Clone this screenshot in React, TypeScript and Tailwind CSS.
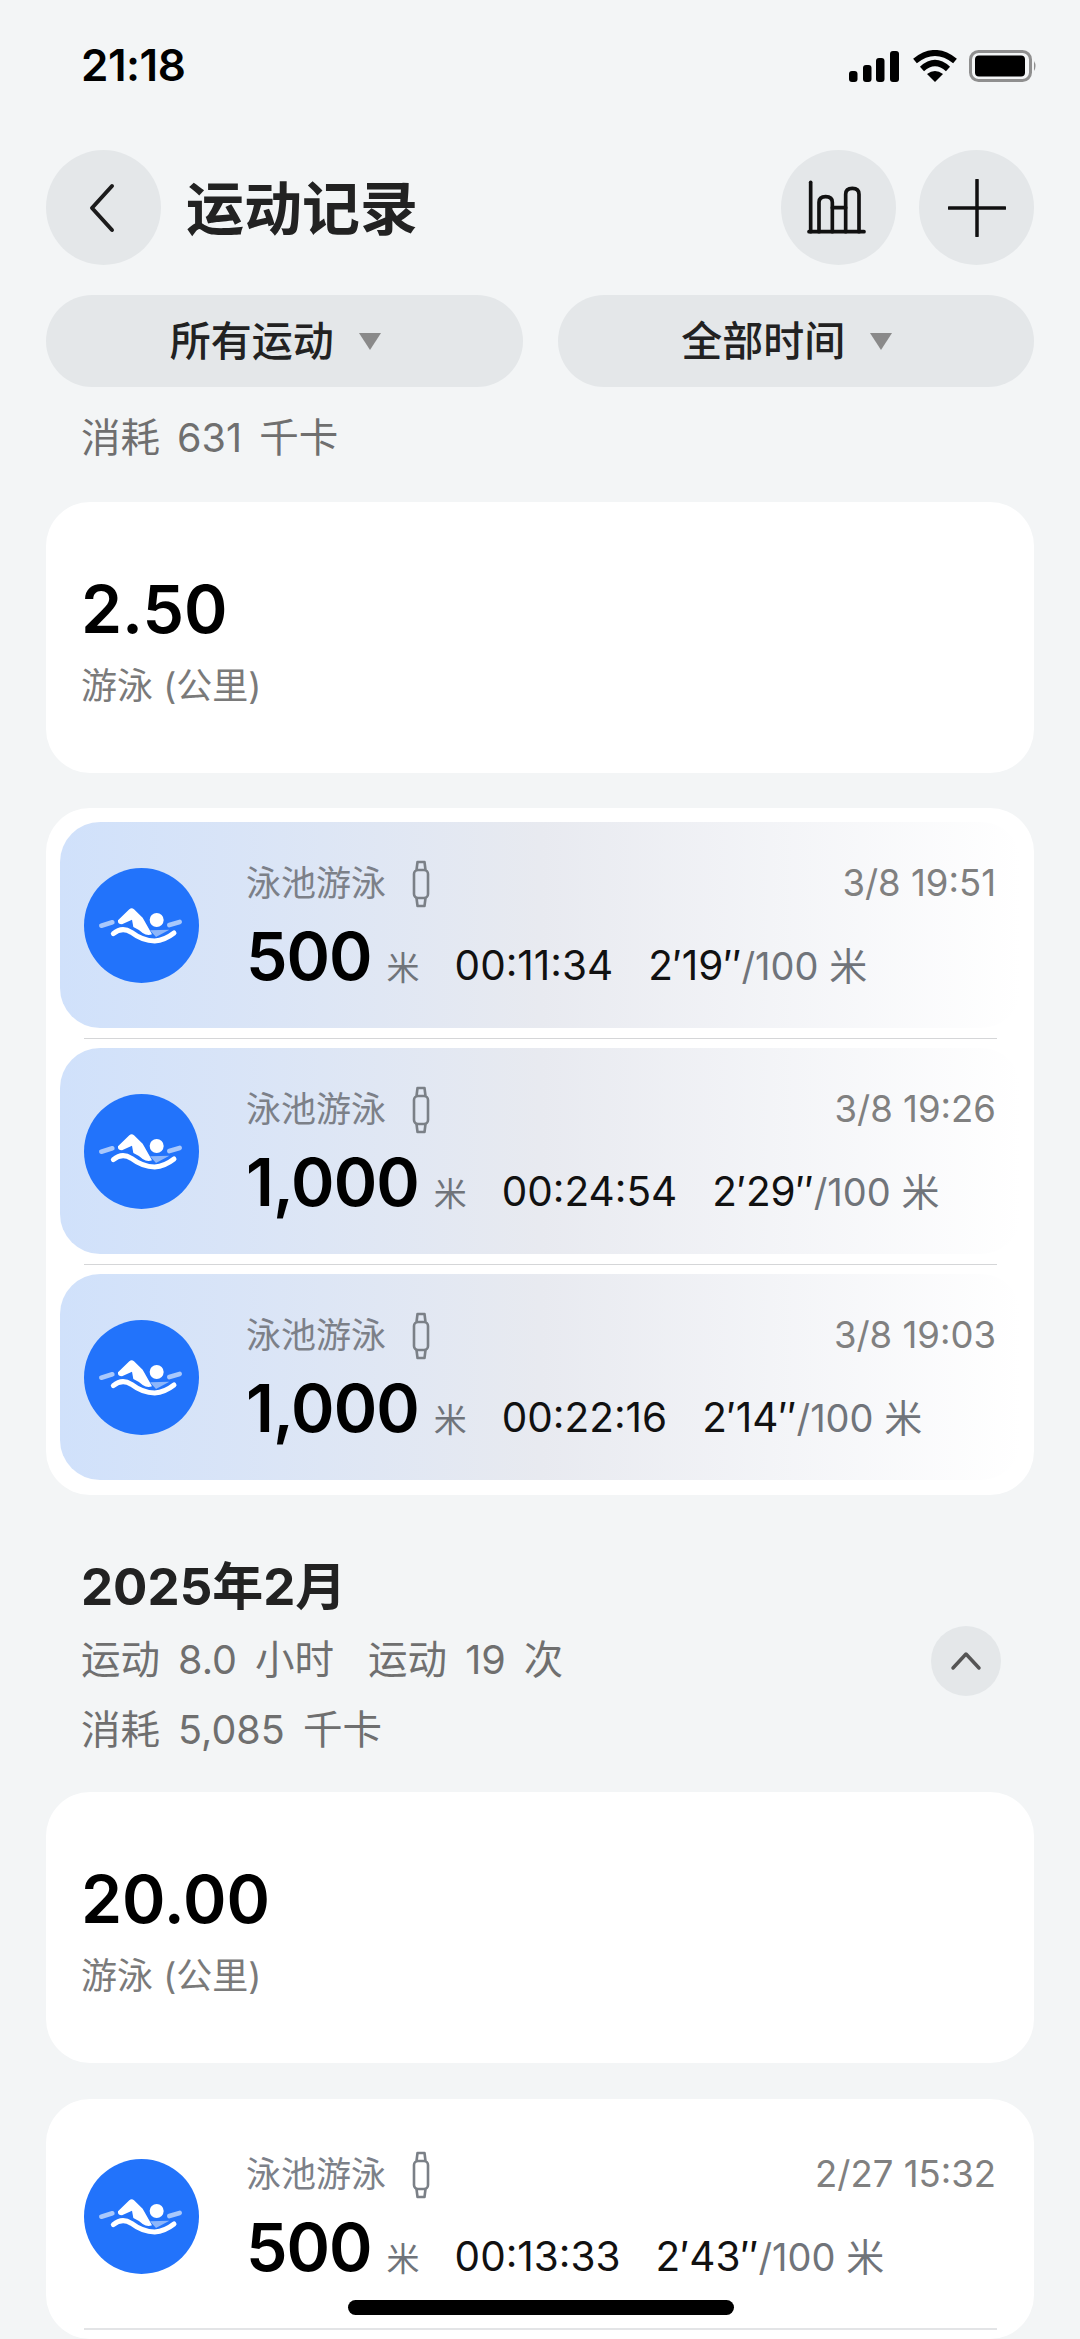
import React from "react";

const font = "font-['Inter','Noto_Sans_CJK_SC',sans-serif]";

type Swim = { dist: string; time: string; pace: string; date: string; highlight: boolean };

const swims: Swim[] = [
  { dist: "500", time: "00:11:34", pace: "2′19″", date: "3/8 19:51", highlight: true },
  { dist: "1,000", time: "00:24:54", pace: "2′29″", date: "3/8 19:26", highlight: true },
  { dist: "1,000", time: "00:22:16", pace: "2′14″", date: "3/8 19:03", highlight: true },
];

const SwimIcon = () => (
  <div className="w-[115px] h-[115px] rounded-full bg-[#2273fb] shrink-0 flex items-center justify-center">
    <svg width="95" height="60" viewBox="0 0 285 180" fill="none">
      <path d="M22 92 L55 82" stroke="#a9c8fb" strokeWidth="14" strokeLinecap="round" />
      <path d="M226 90 L257 81" stroke="#a9c8fb" strokeWidth="14" strokeLinecap="round" />
      <path d="M168 106 L226 104 L186 126 Z" fill="#8db6fa" />
      <circle cx="188" cy="75" r="21" fill="#fff" />
      <path d="M72 76 L106 43 Q113 37 120 43 L146 68 L174 118 Q160 124 146 114 Q132 102 118 96 L114 74 L84 88 Q70 88 72 76 Z" fill="#fff" />
      <path d="M58 116 Q84 94 112 112 Q146 138 182 138 Q212 136 240 114" stroke="#fff" strokeWidth="15" strokeLinecap="round" />
    </svg>
  </div>
);

const BandIcon = () => (
  <svg width="18" height="48" viewBox="0 0 18 48" fill="none" stroke="#7b8087" strokeWidth="2.6" strokeLinejoin="round">
    <rect x="2" y="10" width="14" height="28" rx="4" />
    <path d="M4.5 10 L5.5 2 H12.5 L13.5 10" />
    <path d="M4.5 38 L5.5 46 H12.5 L13.5 38" />
  </svg>
);

const SwimRow = ({ s }: { s: Swim }) => (
  <div
    className={
      "h-[206px] rounded-[40px] pl-6 pr-[25px] flex items-center " +
      (s.highlight ? "bg-linear-to-r from-[#d0e1fb] via-[#e8eaf0] to-white" : "")
    }
  >
    <SwimIcon />
    <div className="ml-[47px] flex-1 pt-[4px] pb-[7px]">
      <div className="flex items-center justify-between h-[46px]">
        <div className="flex items-center gap-[26px]">
          <span className="text-[35px] text-[#7c8088]">泳池游泳</span>
          <BandIcon />
        </div>
        <span className="text-[36.5px] text-[#808080]">{s.date}</span>
      </div>
      <div className="flex items-baseline h-[80px]">
        <span className="text-[66px] font-semibold text-black tracking-[-1px]">{s.dist}</span>
        <span className="text-[33px] text-[#70747a] ml-[15px]">米</span>
        <span className="text-[40.5px] text-[#111] ml-[35px]">{s.time}</span>
        <span className="text-[40.5px] text-[#111] ml-[35px]">{s.pace}</span>
        <span className="text-[38px] text-[#70747a]">/100 米</span>
      </div>
    </div>
  </div>
);

const Summary = ({ value }: { value: string }) => (
  <div className="mx-[46px] h-[271px] bg-white rounded-[44px] pl-[35px] pt-[65px]">
    <div className="text-[66px] leading-[84px] font-semibold text-black">{value}</div>
    <div className="text-[36px] leading-[46px] mt-[12px] text-[#7a7a7a]">游泳 (公里)</div>
  </div>
);

export default function App() {
  return (
    <div className={"relative w-[1080px] h-[2339px] overflow-hidden bg-[#f3f5f6] " + font}>
      {/* status bar */}
      <div className="h-[150px] pl-[81px] pr-[43px] pt-[40px] flex justify-between items-start">
        <span className="text-[44px] leading-[50px] font-semibold text-black tracking-[-0.5px]">21:18</span>
        <div className="flex items-center gap-[12px] pt-[10px]">
          <svg width="52" height="31" viewBox="0 0 52 31" fill="#000">
            <rect x="0" y="20" width="8.5" height="11" rx="3" />
            <rect x="14" y="14" width="8.5" height="17" rx="3" />
            <rect x="27" y="7" width="8.5" height="24" rx="3" />
            <rect x="41" y="0" width="9" height="31" rx="3" />
          </svg>
          <svg width="44" height="32" viewBox="0 0 44 32" fill="none" stroke="#000" strokeWidth="6">
            <path d="M2 11 Q22 -5 42 11" />
            <path d="M9 19 Q22 7 35 19" />
            <path d="M22 32 L14 24 Q22 18 30 24 Z" fill="#000" stroke="none" />
          </svg>
          <svg width="68" height="32" viewBox="0 0 68 32" fill="none">
            <rect x="1.5" y="1.5" width="60" height="29" rx="8" stroke="#8f8f8f" strokeWidth="3" />
            <rect x="6" y="5.5" width="50" height="21" rx="4" fill="#000" />
            <path d="M65 11 Q68 16 65 21 Z" fill="#8f8f8f" />
          </svg>
        </div>
      </div>

      {/* header */}
      <div className="flex items-center px-[46px]">
        <div className="w-[115px] h-[115px] rounded-full bg-[#e4e7e9] flex items-center justify-center pr-[3px]">
          <svg width="30" height="50" viewBox="0 0 30 50" fill="none" stroke="#1c1c1c" strokeWidth="4" strokeLinecap="round" strokeLinejoin="round">
            <path d="M25 3 L5 25 L25 47" />
          </svg>
        </div>
        <h1 className="ml-[25px] flex-1 pt-[4px] text-[58px] font-bold text-[#222]">运动记录</h1>
        <div className="w-[115px] h-[115px] rounded-full bg-[#e4e7e9] flex items-center justify-center">
          <svg width="100" height="85" viewBox="0 0 300 255" fill="none" stroke="#111" strokeWidth="11" strokeLinecap="round">
            <path d="M60 200 H225" />
            <path d="M65 52 V200" />
            <path d="M90 200 V112 Q90 95 110 95 Q130 95 130 112 V200" />
            <path d="M130 128 H170" />
            <path d="M170 200 V88 Q170 70 190 70 Q210 70 210 88 V200" />
          </svg>
        </div>
        <div className="ml-[23px] w-[115px] h-[115px] rounded-full bg-[#e4e7e9] flex items-center justify-center">
          <svg width="58" height="58" viewBox="0 0 58 58" fill="none" stroke="#111" strokeWidth="3.5" strokeLinecap="round">
            <path d="M29 1 V57" />
            <path d="M1 29 H57" />
          </svg>
        </div>
      </div>

      {/* filters */}
      <div className="mt-[30px] mx-[46px] flex gap-[35px]">
        {["所有运动", "全部时间"].map((label) => (
          <div key={label} className="flex-1 h-[92px] rounded-full bg-[#e4e7e9] flex items-center justify-center gap-[25px] pr-[18px]">
            <span className="text-[41px] font-medium text-[#222] pt-[2px]">{label}</span>
            <div className="w-0 h-0 border-x-[11px] border-x-transparent border-t-[17px] border-t-[#8a8a8a]" />
          </div>
        ))}
      </div>

      <div className="mt-[25px] ml-[81px] text-[39.5px] leading-[52px] text-[#6f6f6f] [word-spacing:6px]">消耗 631 千卡</div>

      <div className="mt-[38px]">
        <Summary value="2.50" />
      </div>

      {/* March list */}
      <div className="mt-[35px] mx-[46px] bg-white rounded-[44px] pt-[14px] pb-[15px] pl-[14px] pr-[13px]">
        {swims.map((s, i) => (
          <div key={s.date}>
            {i > 0 && <div className="h-[20px] flex items-center ml-[24px] mr-[24px]"><div className="h-px w-full bg-[#d5d6d8]" /></div>}
            <SwimRow s={s} />
          </div>
        ))}
      </div>

      {/* February header */}
      <div className="mt-[59px] mx-[46px] pl-[35px] relative h-[222px]">
        <h2 className="text-[51px] leading-[66px] font-bold text-[#222]">2025年2月</h2>
        <div className="mt-[14px] flex gap-[34px] text-[39.5px] leading-[52px] text-[#6f6f6f] [word-spacing:7px]">
          <span>运动 8.0 小时</span>
          <span>运动 19 次</span>
        </div>
        <div className="mt-[18px] text-[39.5px] leading-[52px] text-[#6f6f6f] [word-spacing:7px]">消耗 5,085 千卡</div>
        <div className="absolute right-[33px] top-[72px] w-[70px] h-[70px] rounded-full bg-[#e4e7e9] flex items-center justify-center">
          <svg width="32" height="20" viewBox="0 0 32 20" fill="none" stroke="#555" strokeWidth="3.5" strokeLinecap="round" strokeLinejoin="round">
            <path d="M3 17 L16 3 L29 17" />
          </svg>
        </div>
      </div>

      <div className="mt-[16px]">
        <Summary value="20.00" />
      </div>

      {/* February list */}
      <div className="mt-[36px] mx-[46px] bg-white rounded-[44px] pt-[14px] pl-[14px] pr-[13px]">
        <SwimRow s={{ dist: "500", time: "00:13:33", pace: "2′43″", date: "2/27 15:32", highlight: false }} />
        <div className="h-[20px] flex items-center ml-[24px] mr-[24px]"><div className="h-[2px] w-full bg-[#e3e4e6]" /></div>
      </div>

      {/* home indicator */}
      <div className="absolute left-[348px] bottom-[24px] w-[386px] h-[15px] rounded-full bg-black" />
    </div>
  );
}
